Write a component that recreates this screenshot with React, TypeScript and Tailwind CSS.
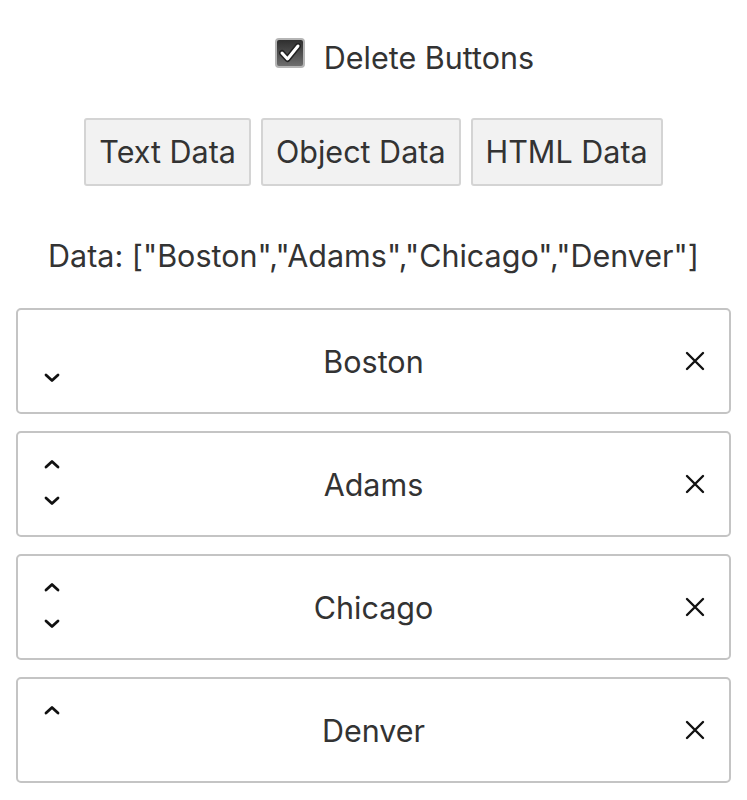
import React from "react";

const Up = () => (
  <svg width="16" height="10" viewBox="0 0 16 10" fill="none">
    <path d="M2 8 L8 2.5 L14 8" stroke="#111" strokeWidth="2.8" strokeLinecap="round" strokeLinejoin="round" />
  </svg>
);
const Down = () => (
  <svg width="16" height="10" viewBox="0 0 16 10" fill="none">
    <path d="M2 2 L8 7.5 L14 2" stroke="#111" strokeWidth="2.8" strokeLinecap="round" strokeLinejoin="round" />
  </svg>
);
const X = () => (
  <svg width="20" height="20" viewBox="0 0 20 20" fill="none">
    <path d="M2 2 L18 18 M18 2 L2 18" stroke="#111" strokeWidth="2.4" strokeLinecap="round" />
  </svg>
);

const items = ["Boston", "Adams", "Chicago", "Denver"];

export default function App() {
  return (
    <div className="w-[747px] h-[800px] bg-white text-[#333] font-['Inter',sans-serif] text-[30.5px] overflow-hidden">
      <div className="flex justify-center items-center pl-[62px] pt-[38px] h-[68px]">
        <div className="w-[30px] h-[30px] rounded-[4px] border-2 border-[#b5b5b5] bg-gradient-to-b from-[#2f2f2f] to-[#6e6e6e] flex items-center justify-center">
          <svg width="22" height="20" viewBox="0 0 22 20" fill="none">
            <path d="M3 10 L8.5 16 L19 3" stroke="#222" strokeWidth="6" strokeLinecap="round" strokeLinejoin="round" />
            <path d="M3 10 L8.5 16 L19 3" stroke="#fff" strokeWidth="3" strokeLinecap="round" strokeLinejoin="round" />
          </svg>
        </div>
        <span className="ml-[19px] leading-none mt-[11px]">Delete Buttons</span>
      </div>
      <div className="flex justify-center gap-[10px] mt-[50px]">
        {["Text Data", "Object Data", "HTML Data"].map((b) => (
          <button key={b} className="h-[68px] px-[13px] bg-[#f2f2f2] border-2 border-[#d4d4d4] rounded-[3px] text-[30.5px] text-[#333]">
            {b}
          </button>
        ))}
      </div>
      <div className="text-center mt-[55px] leading-none">Data: ["Boston","Adams","Chicago","Denver"]</div>
      <div className="flex flex-col gap-[17px] mx-[16px] mt-[36px]">
        {items.map((it, i) => (
          <div key={it} className="grid grid-cols-[68px_1fr_68px] h-[106px] border-2 border-[#c4c4c4] rounded-[5px]">
            <div className="flex flex-col items-center pt-[24px]">
              <div className="h-[14px] flex items-center">{i > 0 ? <Up /> : null}</div>
              <div className="h-[14px] mt-[23px] flex items-center">{i < items.length - 1 ? <Down /> : null}</div>
            </div>
            <div className="flex items-center justify-center pt-[3px]">{it}</div>
            <div className="flex items-center justify-center"><X /></div>
          </div>
        ))}
      </div>
    </div>
  );
}
